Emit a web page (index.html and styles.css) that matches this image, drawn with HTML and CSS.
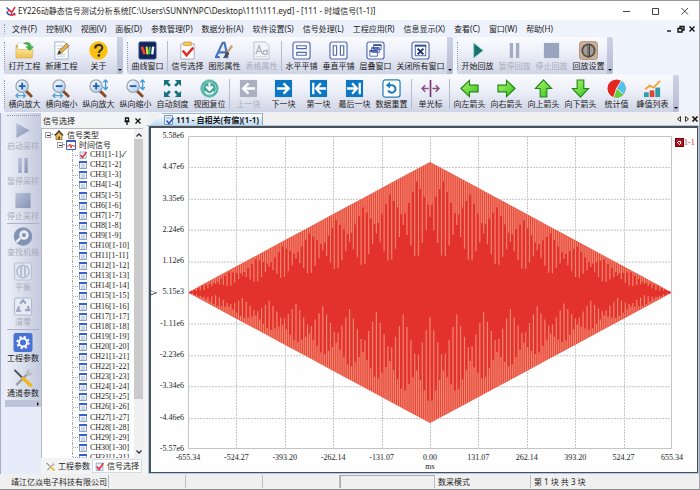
FILE: index.html
```html
<!DOCTYPE html>
<html lang="zh-CN">
<head>
<meta charset="utf-8">
<title>EY226动静态信号测试分析系统</title>
<link rel="stylesheet" href="styles.css">
</head>
<body>
<svg class="defs" aria-hidden="true">
  <defs>
    <linearGradient id="gGreen" x1="0" y1="0" x2="1" y2="1"><stop offset="0" stop-color="#b4f56a"/><stop offset="1" stop-color="#2fc41c"/></linearGradient>
    <linearGradient id="gFolder" x1="0" y1="0" x2="0" y2="1"><stop offset="0" stop-color="#fdf0a8"/><stop offset="1" stop-color="#eec052"/></linearGradient>
    <linearGradient id="gLens" x1="0" y1="0" x2="1" y2="1"><stop offset="0" stop-color="#ffffff"/><stop offset="1" stop-color="#a9cdf2"/></linearGradient>
    <linearGradient id="gGray" x1="0" y1="0" x2="1" y2="1"><stop offset="0" stop-color="#b9c3dc"/><stop offset="1" stop-color="#8592b4"/></linearGradient>
    <g id="lens"><path d="M11.500 12.500l5.500 5.500" stroke="#8a4a28" stroke-width="3" stroke-linecap="round"/><circle cx="7.500" cy="7.500" r="6.500" fill="url(#gLens)" stroke="#9ba5b4" stroke-width="1.400"/></g>
  </defs>
  <symbol id="i-logo" viewBox="0 0 10 10"><path d="M.5 1.500l3 2.500M1 5.500c0 4 6 4.500 8 1.500" stroke="#2c4fb0" stroke-width="1.500" fill="none"/><path d="M1.500 5l3-.5 1 2.500L9 1M4 8.800h5.500" stroke="#e02c3c" stroke-width="1.500" fill="none"/></symbol>
  <symbol id="i-open" viewBox="0 0 20 20"><path d="M1 4h6l1 2h8v5H1z" fill="#d9b04a"/><path d="M3 2h9l3 3v9H3z" fill="#fff" stroke="#c9ccd2" stroke-width=".5"/><path d="M1 18V6l3 3h15l-1 9z" fill="url(#gFolder)" stroke="#d2a84a" stroke-width=".6"/><path d="M9 3c4-3 8-1 8 3h2.500l-4 4-4-4H14c0-2-2-3-5-3z" fill="#43b649" stroke="#2b8d36" stroke-width=".5"/></symbol>
  <symbol id="i-new" viewBox="0 0 20 20"><path d="M3 1h10l4 4v14H3z" fill="#fff" stroke="#9eb0c4"/><path d="M5 5h6M5 8h7M5 14h9M5 16h9" stroke="#b8cbe0"/><path d="M6 14l1.500-4 8-7.500 2.500 2.500-8 7.500z" fill="#f2b23a" stroke="#555" stroke-width=".7"/><path d="M6 14l1.500-4 2.500 2.500z" fill="#333"/></symbol>
  <symbol id="i-about" viewBox="0 0 20 20"><circle cx="10" cy="10" r="9.700" fill="#fcc212"/><path d="M6.500 8c0-5 7.500-5 7.500-.8 0 2.600-3.600 2.600-3.600 5.300" fill="none" stroke="#3b362c" stroke-width="2.300"/><circle cx="10.400" cy="15.300" r="1.500" fill="#3b362c"/></symbol>
  <symbol id="i-curve" viewBox="0 0 20 20"><rect x="1" y="1" width="18" height="18" rx="1.500" fill="#12245c" stroke="#345090"/><path d="M4 6l3 8" stroke="#e94228" stroke-width="3"/><path d="M9 6l1 8" stroke="#f2e33a" stroke-width="2.200"/><path d="M12.500 6l-1 8" stroke="#43c34e" stroke-width="2"/><path d="M16 6l-1 8" stroke="#f4f6fa" stroke-width="2.600"/></symbol>
  <symbol id="i-pick" viewBox="0 0 20 20"><path d="M3 3h14v16H3z" fill="#fff" stroke="#a5abb6"/><path d="M6 1h8v4H6z" fill="#f3c45c" stroke="#c28d32" stroke-width=".6"/><path d="M5 10l4 5 7-8" fill="none" stroke="#e22b2b" stroke-width="2.600"/></symbol>
  <symbol id="i-shape" viewBox="0 0 20 20"><path d="M1 17L8 2h2l3 13M4 12h8M0 17h5M10 17h4" fill="none" stroke="#4674bd" stroke-width="2.300"/><path d="M18 5l-5 7" stroke="#c79f6d" stroke-width="2.400"/><path d="M13 11l2 2c-1 4-4 5-7 5 3-2 2-6 5-7z" fill="#4f4b50"/></symbol>
  <symbol id="i-form" viewBox="0 0 20 20"><path d="M2 1h12l4 4v14H2z" fill="#f3f4f8" stroke="#bcc1cc"/><path d="M4 14l3.500-9 3.500 9M5.500 11h4" fill="none" stroke="#adb2be" stroke-width="1.400"/><path d="M16 9v5.500M16 12c0-3-4-3-4 0s4 3 4 0" fill="none" stroke="#adb2be" stroke-width="1.300"/><path d="M4 16.500h12" stroke="#ccd0da"/></symbol>
  <symbol id="i-frame" viewBox="0 0 20 20"><rect x="1" y="1" width="18" height="18" rx="2.500" fill="#f8faff" stroke="#5269b0" stroke-width="1.200"/></symbol>
  <symbol id="i-htile" viewBox="0 0 20 20"><use href="#i-frame"/><path d="M5 5h10v3H5zM5 12h10v3H5z" fill="#fff" stroke="#5269b0" stroke-width="1.200"/></symbol>
  <symbol id="i-vtile" viewBox="0 0 20 20"><use href="#i-frame"/><path d="M4.500 5H8v10H4.500zM12 5h3.500v10H12z" fill="#fff" stroke="#5269b0" stroke-width="1.200"/></symbol>
  <symbol id="i-cascade" viewBox="0 0 20 20"><use href="#i-frame"/><path d="M8 4h8v5H8zM6 7h8v5H6zM4 10h8v6H4z" fill="#fff" stroke="#5269b0"/><path d="M8 4.500h8M6 7.500h8M4 10.500h8" stroke="#2e4a9e" stroke-width="1.500"/></symbol>
  <symbol id="i-closeall" viewBox="0 0 20 20"><use href="#i-frame"/><rect x="4.500" y="4.500" width="11" height="11" fill="#fff" stroke="#4a63aa"/><path d="M4 5h12" stroke="#3a539c" stroke-width="2"/><path d="M7 8l6 6M13 8l-6 6" stroke="#1d2f6e" stroke-width="2"/></symbol>
  <symbol id="i-play" viewBox="0 0 20 20"><path d="M6 2l10 8-10 8z" fill="#1b6f6c" stroke="#8ed8cf"/></symbol>
  <symbol id="i-pause" viewBox="0 0 20 20"><path d="M5 2h3.500v16H5zM11.500 2H15v16h-3.500z" fill="#a3acc2"/></symbol>
  <symbol id="i-stop" viewBox="0 0 20 20"><path d="M2 2h16v16H2z" fill="#9aa4bf"/></symbol>
  <symbol id="i-knob" viewBox="0 0 20 20"><rect x=".5" y=".5" width="19" height="19" rx="3" fill="#c9ad96" stroke="#b3967d"/><circle cx="10" cy="10" r="7.500" fill="#55504c"/><circle cx="10" cy="10" r="5.500" fill="#a79f96"/><path d="M8.500 3.500h3v13h-3z" fill="#3b3835"/><path d="M9.500 4v12" stroke="#ddd" stroke-width=".8"/></symbol>
  <symbol id="i-hin" viewBox="0 0 20 20"><use href="#lens"/><path d="M7.500 4v7M4 7.500h7" stroke="#275fb4" stroke-width="2"/><path d="M1 17.500h10M3.500 15L1 17.500 3.500 20M8.500 15l2.500 2.500L8.500 20" fill="none" stroke="#4fa3d8" stroke-width="1.400"/></symbol>
  <symbol id="i-hout" viewBox="0 0 20 20"><use href="#lens"/><path d="M4 7.500h7" stroke="#275fb4" stroke-width="2"/><path d="M1 17.500h10M3.500 15L1 17.500 3.500 20M8.500 15l2.500 2.500L8.500 20" fill="none" stroke="#4fa3d8" stroke-width="1.400"/></symbol>
  <symbol id="i-vin" viewBox="0 0 20 20"><use href="#lens"/><path d="M7.500 4v7M4 7.500h7" stroke="#275fb4" stroke-width="2"/><path d="M17.500 1v10M15 3.500L17.500 1 20 3.500M15 8.500l2.500 2.500L20 8.500" fill="none" stroke="#3f9ad6" stroke-width="1.400"/></symbol>
  <symbol id="i-vout" viewBox="0 0 20 20"><use href="#lens"/><path d="M4 7.500h7" stroke="#275fb4" stroke-width="2"/><path d="M17.500 1v10M15 3.500L17.500 1 20 3.500M15 8.500l2.500 2.500L20 8.500" fill="none" stroke="#3f9ad6" stroke-width="1.400"/></symbol>
  <symbol id="i-auto" viewBox="0 0 20 20"><path d="M1 1h6.500L5.300 3.200l3 3-2 2-3-3L1 7.500zM19 1v6.500l-2.300-2.300-3 3-2-2 3-3L12.500 1zM1 19v-6.500l2.300 2.300 3-3 2 2-3 3L7.500 19zM19 19h-6.500l2.200-2.200-3-3 2-2 3 3 2.300-2.300z" fill="#16737c"/></symbol>
  <symbol id="i-reset" viewBox="0 0 20 20"><circle cx="10" cy="10" r="9.300" fill="#3fa79b" stroke="#8ecdc5"/><circle cx="10" cy="10" r="7" fill="none" stroke="#a9ddd6"/><path d="M10 4v7M6.500 8l3.500 3.500L13.500 8" fill="none" stroke="#fff" stroke-width="2.200"/><path d="M5.500 13c2 3.500 7 3.500 9 0" fill="none" stroke="#fff" stroke-width="1.500"/></symbol>
  <symbol id="i-prev" viewBox="0 0 20 20"><path d="M1 1h18v18H1z" fill="#aab0c0"/><path d="M17 10H5M10 4.500L4.500 10l5.500 5.500" fill="none" stroke="#fff" stroke-width="2.600"/></symbol>
  <symbol id="i-next" viewBox="0 0 20 20"><path d="M1 1h18v18H1z" fill="#0b76c2"/><path d="M3 10h12M10 4.500l5.500 5.500-5.500 5.500" fill="none" stroke="#fff" stroke-width="2.600"/></symbol>
  <symbol id="i-first" viewBox="0 0 20 20"><path d="M1 1h18v18H1z" fill="#0b76c2"/><path d="M4.500 4v12M18 10H8M12.500 4.500L7.500 10l5 5.500" fill="none" stroke="#fff" stroke-width="2.400"/></symbol>
  <symbol id="i-last" viewBox="0 0 20 20"><path d="M1 1h18v18H1z" fill="#0b76c2"/><path d="M15.500 4v12M2 10h10M7.500 4.500l5 5.500-5 5.500" fill="none" stroke="#fff" stroke-width="2.400"/></symbol>
  <symbol id="i-reload" viewBox="0 0 20 20"><rect x="1" y="1" width="18" height="18" rx="2.500" fill="#fff" stroke="#2580b4" stroke-width="1.300"/><path d="M6 6.500h5a4 4 0 1 1-4.500 5.500" fill="none" stroke="#1d7fb8" stroke-width="2.200"/><path d="M8.500 3v7L4 6.500z" fill="#1d7fb8"/></symbol>
  <symbol id="i-cursor" viewBox="0 0 20 20"><path d="M10 1v18" stroke="#7c3a74" stroke-width="1.800"/><path d="M1 10h7M12 10h7M4.500 6.500L1 10l3.500 3.500M15.500 6.500L19 10l-3.500 3.500" fill="none" stroke="#8e4a84" stroke-width="1.600"/></symbol>
  <symbol id="i-left" viewBox="0 0 20 20"><path d="M1 10l9-8.500v5h9v7h-9v5z" fill="url(#gGreen)" stroke="#23861b" stroke-width="1.200"/></symbol>
  <symbol id="i-right" viewBox="0 0 20 20"><path d="M19 10l-9-8.500v5H1v7h9v5z" fill="url(#gGreen)" stroke="#23861b" stroke-width="1.200"/></symbol>
  <symbol id="i-up" viewBox="0 0 20 20"><path d="M10 1l8.500 9h-5v9h-7v-9h-5z" fill="url(#gGreen)" stroke="#23861b" stroke-width="1.200"/></symbol>
  <symbol id="i-down" viewBox="0 0 20 20"><path d="M10 19l8.500-9h-5V1h-7v9h-5z" fill="url(#gGreen)" stroke="#23861b" stroke-width="1.200"/></symbol>
  <symbol id="i-pie" viewBox="0 0 20 20"><circle cx="10" cy="10" r="9.500" fill="#e5261f"/><path d="M10 10l5-8.200A9.500 9.500 0 0 1 17.500 16z" fill="#4fc3f0"/><path d="M10 10l7.500 6A9.500 9.500 0 0 1 7 19z" fill="#63cf3e"/><path d="M15 1.800L10 10l-3 9M10 10l7.500 6" stroke="#fff" stroke-width=".8" fill="none"/></symbol>
  <symbol id="i-bars" viewBox="0 0 20 20"><path d="M1 14h5v5H1z" fill="#2b9fa8"/><path d="M7 12h5v7H7z" fill="#e04638"/><path d="M13 9h5v10h-5z" fill="#2f9a9f"/><path d="M2 11l5-4 4 2 7-7" fill="none" stroke="#f0a53a" stroke-width="2"/></symbol>
  <symbol id="i-gplay" viewBox="0 0 20 20"><path d="M3 2l14 8-14 8z" fill="url(#gGray)"/></symbol>
  <symbol id="i-gpause" viewBox="0 0 20 20"><path d="M5 2h3.500v16H5zM11.500 2H15v16h-3.500z" fill="url(#gGray)"/></symbol>
  <symbol id="i-gstop" viewBox="0 0 20 20"><path d="M2 2h16v16H2z" fill="url(#gGray)"/></symbol>
  <symbol id="i-find" viewBox="0 0 20 20"><circle cx="10" cy="10" r="9.700" fill="#8493b4"/><circle cx="11" cy="8.500" r="5" fill="#e9edf6"/><circle cx="11" cy="8.500" r="2.200" fill="#8493b4"/><path d="M7 12l-4 4" stroke="#e9edf6" stroke-width="2.500"/></symbol>
  <symbol id="i-balance" viewBox="0 0 20 20"><rect x="1" y="1" width="18" height="18" rx="2" fill="#dfe4ef" stroke="#b4bed2"/><circle cx="10" cy="10" r="6.500" fill="none" stroke="#a6b2ca" stroke-width="1.300"/><path d="M8 5v10M12 5v10" stroke="#a6b2ca" stroke-width="1.500"/></symbol>
  <symbol id="i-clear" viewBox="0 0 20 20"><rect x="1" y="1" width="18" height="18" rx="2" fill="#e6eaf3" stroke="#a9b4cb"/><path d="M7 7l3-3.500L13 7M15 9.500l1.500 4.500H12M8 14.500H4L6 10" fill="none" stroke="#94a2c0" stroke-width="2.200"/></symbol>
  <symbol id="i-gear" viewBox="0 0 20 20"><rect width="20" height="20" rx="2.500" fill="#4a71d6"/><circle cx="10" cy="10" r="6" fill="none" stroke="#fff" stroke-width="2" stroke-dasharray="2.360 2.350"/><circle cx="10" cy="10" r="4.200" fill="none" stroke="#fff" stroke-width="2"/></symbol>
  <symbol id="i-tools" viewBox="0 0 20 20"><path d="M3 18L15 6" stroke="#9aa0aa" stroke-width="2.600"/><path d="M13 6c0-3 2-5 5-5l-2 3 2 1.500L20 4c0 4-3 5-6 4z" fill="#b9bec7"/><path d="M1 2l8 8" stroke="#4a4f57" stroke-width="2"/><path d="M10 11l8 7" stroke="#efb51e" stroke-width="3.600" stroke-linecap="round"/></symbol>
  <symbol id="i-home" viewBox="0 0 10 10"><path d="M1 5.500L5 1l4 4.500" fill="none" stroke="#3a3320" stroke-width="1.400"/><path d="M2 5.500L5 2.500l3 3V9.500H2z" fill="#f0c257" stroke="#6b5320" stroke-width=".7"/><path d="M4.300 6.500h1.600v3H4.300z" fill="#5c3a1a"/></symbol>
  <symbol id="i-time" viewBox="0 0 10 10"><path d="M.5.500h9v9h-9z" fill="#fff" stroke="#4161b5"/><path d="M.5 1h9" stroke="#2c51c0" stroke-width="1.800"/><path d="M1 6h2l1-2 1 4 1-3 1 1h2" fill="none" stroke="#e23a3a"/></symbol>
  <symbol id="i-chan" viewBox="0 0 8 8"><path d="M.5.500h7v7h-7z" fill="#eef2fb" stroke="#8fa0c0"/><path d="M0 1h8" stroke="#3460d0" stroke-width="2"/><path d="M2 4h4M2 6h4" stroke="#a9b7d4"/></symbol>
  <symbol id="i-mark" viewBox="0 0 8 8"><path d="M1 1h6v6.500H1z" fill="#eaf0fb" stroke="#7c9ad2" stroke-width=".7"/><path d="M1.500 4L3.500 6.500 7.500 1" fill="none" stroke="#e0342c" stroke-width="1.500"/></symbol>
  <symbol id="i-doc" viewBox="0 0 10 10"><path d="M.5.500h8v9h-8z" fill="#e8f0fb" stroke="#7d94bb"/><path d="M2 3h5" stroke="#9aaed0"/><path d="M2.500 5.500L5 8.500 9.500 3" fill="none" stroke="#2a62c4" stroke-width="1.600"/></symbol>
</svg>

<header class="titlebar">
  <svg class="logo"><use href="#i-logo"/></svg>
  <h1>EY226动静态信号测试分析系统[C:\Users\SUNNYNPC\Desktop\111\111.eyd] - [111 - 时域信号(1-1)]</h1>
  <div class="winbtns">
    <button aria-label="最小化"><svg viewBox="0 0 8 8"><path d="M0 4.500h7"/></svg></button>
    <button aria-label="最大化"><svg viewBox="0 0 8 8"><path d="M.5 1.500h6v6h-6z"/></svg></button>
    <button aria-label="关闭"><svg viewBox="0 0 8 8"><path d="M.5 1l6.500 6.500M7 1L.5 7.500"/></svg></button>
  </div>
</header>

<nav class="menubar">
  <i class="grip"></i>
  <button>文件(F)</button><button>控制(K)</button><button>视图(V)</button><button>面板(D)</button><button>参数管理(P)</button><button>数据分析(A)</button><button>软件设置(S)</button><button>信号处理(L)</button><button>工程应用(R)</button><button>信息显示(X)</button><button>查看(C)</button><button>窗口(W)</button><button>帮助(H)</button>
  <div class="mdibtns">
    <button aria-label="最小化子窗口"><svg viewBox="0 0 8 8"><path d="M1 6h4"/></svg></button>
    <button aria-label="还原子窗口"><svg viewBox="0 0 8 8"><path d="M3 3V1.500h4V5H5M1 3.500h4V7H1z"/></svg></button>
    <button aria-label="关闭子窗口"><svg viewBox="0 0 8 8"><path d="M1.500 1.500l5 5M6.500 1.500l-5 5"/></svg></button>
  </div>
</nav>

<div class="toolrow">
  <div class="toolbar">
    <i class="grip"></i>
    <button><svg><use href="#i-open"/></svg>打开工程</button>
    <button><svg><use href="#i-new"/></svg>新建工程</button>
    <button><svg><use href="#i-about"/></svg>关于</button>
    <i class="cap"></i>
  </div>
  <div class="toolbar">
    <i class="grip"></i>
    <button><svg><use href="#i-curve"/></svg>曲线窗口</button>
    <i class="sep"></i>
    <button><svg><use href="#i-pick"/></svg>信号选择</button>
    <button><svg><use href="#i-shape"/></svg>图形属性</button>
    <button disabled><svg><use href="#i-form"/></svg>表格属性</button>
    <i class="sep"></i>
    <button><svg><use href="#i-htile"/></svg>水平平铺</button>
    <button><svg><use href="#i-vtile"/></svg>垂直平铺</button>
    <button><svg><use href="#i-cascade"/></svg>层叠窗口</button>
    <button class="wide"><svg><use href="#i-closeall"/></svg>关闭所有窗口</button>
    <i class="cap"></i>
  </div>
  <div class="toolbar">
    <i class="grip"></i>
    <button><svg><use href="#i-play"/></svg>开始回放</button>
    <button disabled><svg><use href="#i-pause"/></svg>暂停回放</button>
    <button disabled><svg><use href="#i-stop"/></svg>停止回放</button>
    <button><svg><use href="#i-knob"/></svg>回放设置</button>
    <i class="cap"></i>
  </div>
</div>

<div class="toolrow second">
  <div class="toolbar">
    <i class="grip"></i>
    <button><svg><use href="#i-hin"/></svg>横向放大</button>
    <button><svg><use href="#i-hout"/></svg>横向缩小</button>
    <button><svg><use href="#i-vin"/></svg>纵向放大</button>
    <button><svg><use href="#i-vout"/></svg>纵向缩小</button>
    <button><svg><use href="#i-auto"/></svg>自动刻度</button>
    <button><svg><use href="#i-reset"/></svg>视图复位</button>
    <i class="sep"></i>
    <button class="slim" disabled><svg><use href="#i-prev"/></svg>上一块</button>
    <button class="slim"><svg><use href="#i-next"/></svg>下一块</button>
    <button class="slim"><svg><use href="#i-first"/></svg>第一块</button>
    <button><svg><use href="#i-last"/></svg>最后一块</button>
    <button><svg><use href="#i-reload"/></svg>数据重置</button>
    <i class="sep"></i>
    <button class="slim"><svg><use href="#i-cursor"/></svg>单光标</button>
    <i class="sep"></i>
    <button><svg><use href="#i-left"/></svg>向左箭头</button>
    <button><svg><use href="#i-right"/></svg>向右箭头</button>
    <button><svg><use href="#i-up"/></svg>向上箭头</button>
    <button><svg><use href="#i-down"/></svg>向下箭头</button>
    <button class="slim"><svg><use href="#i-pie"/></svg>统计值</button>
    <button><svg><use href="#i-bars"/></svg>峰值列表</button>
    <i class="cap"></i>
  </div>
</div>

<main class="work">
  <aside class="side">
    <div class="sidebar">
      <i class="hgrip"></i>
      <button disabled><svg><use href="#i-gplay"/></svg>启动采样</button>
      <button disabled><svg><use href="#i-gpause"/></svg>暂停采样</button>
      <button disabled><svg><use href="#i-gstop"/></svg>停止采样</button>
      <i class="hsep"></i>
      <button disabled><svg><use href="#i-find"/></svg>查找机箱</button>
      <button disabled><svg><use href="#i-balance"/></svg>平衡</button>
      <button disabled><svg><use href="#i-clear"/></svg>清零</button>
      <i class="hsep"></i>
      <button><svg><use href="#i-gear"/></svg>工程参数</button>
      <button><svg><use href="#i-tools"/></svg>通道参数</button>
      <i class="hcap"></i>
    </div>
  </aside>

  <section class="panel">
    <header class="panelhead">
      <h2>信号选择</h2>
      <button aria-label="固定"><svg viewBox="0 0 8 8"><path d="M2.500 1h3v3h-3zM1.500 4.500h5M4 4.500V8"/></svg></button>
      <button aria-label="关闭面板"><svg viewBox="0 0 8 8"><path d="M1.500 1.500l5 5M6.500 1.500l-5 5"/></svg></button>
    </header>
    <div class="treebox">
      <ul class="tree" id="tree">
        <li class="root"><i class="fold"></i><svg><use href="#i-home"/></svg>信号类型</li>
        <li class="group"><i class="fold"></i><svg><use href="#i-time"/></svg>时间信号</li>
      </ul>
      <div class="scroll">
        <svg viewBox="0 0 8 8"><path d="M1.500 5.500L4 3l2.500 2.500"/></svg>
        <i class="thumb"></i>
        <svg viewBox="0 0 8 8"><path d="M1.500 2.500L4 5l2.500-2.500"/></svg>
      </div>
    </div>
    <div class="paneltabs">
      <button><svg><use href="#i-tools"/></svg>工程参数</button>
      <button class="active"><svg><use href="#i-mark"/></svg>信号选择</button>
    </div>
  </section>

  <section class="docs">
    <div class="doctabs">
      <button class="doctab"><svg><use href="#i-doc"/></svg>111 - 自相关(有偏)(1-1)</button>
      <div class="docnav">
        <button aria-label="上一个"><svg viewBox="0 0 8 8"><path d="M5.500 1.500v5L2.500 4z"/></svg></button>
        <button aria-label="下一个"><svg viewBox="0 0 8 8"><path d="M2.500 1.500v5L5.500 4z"/></svg></button>
        <button aria-label="关闭文档"><svg class="bold" viewBox="0 0 8 8"><path d="M1.500 1.500l5 5M6.500 1.500l-5 5"/></svg></button>
      </div>
    </div>
    <div class="chart">
      <span class="yunit">V</span>
      <div class="yaxis"><span>5.58e6</span><span>4.47e6</span><span>3.35e6</span><span>2.24e6</span><span>1.12e6</span><span>5.15e3</span><span>-1.11e6</span><span>-2.23e6</span><span>-3.34e6</span><span>-4.46e6</span><span>-5.57e6</span></div>
      <svg class="plot" viewBox="0 0 484 314" preserveAspectRatio="none" role="img" aria-label="自相关曲线">
        <path class="gridlines" id="gridlines"/>
        <path class="wave" d="M0 157L242 26 484 157 242 288z"/>
        <path class="stripes" id="stripes"/>
        <path class="edge" d="M.5.500h483v313H.5z"/>
      </svg>
      <div class="legend"><i></i>1-1</div>
      <div class="xaxis"><span>-655.34</span><span>-524.27</span><span>-393.20</span><span>-262.14</span><span>-131.07</span><span>0.00</span><span>131.07</span><span>262.14</span><span>393.20</span><span>524.27</span><span>655.34</span></div>
      <span class="xunit">ms</span>
    </div>
  </section>
</main>

<footer class="status">
  <span class="company">靖江亿焱电子科技有限公司</span>
  <span></span><span></span><span></span>
  <span class="inset"></span>
  <span>数采模式</span>
  <span class="block">第 1 块 共 3 块</span>
</footer>
<script src="app.js"></script>
</body>
</html>
```
FILE: styles.css
```css
* { box-sizing: border-box; }

body {
  margin: 0;
  height: 100vh;
  display: flex;
  flex-direction: column;
  overflow: hidden;
  background: #f0f4fc;
  color: #1c1c22;
  font: 8px/10px "Noto Sans", "Noto Sans CJK SC", sans-serif;
  border-top: 1px solid #9a9a9a;
  border-right: 1px solid #a9a4ac;
  border-bottom: 1px solid #8e8e8e;
}

.defs { position: absolute; width: 0; height: 0; }

h1, h2, ul { margin: 0; padding: 0; font: inherit; }

button {
  margin: 0;
  padding: 0;
  border: 0;
  background: none;
  color: inherit;
  font: inherit;
  white-space: nowrap;
}

svg { display: block; flex: none; }

/* Title and menu */
.titlebar {
  flex: none;
  height: 19px;
  display: flex;
  align-items: center;
  gap: 2px;
  padding-left: 6px;
  background: #fff;
}
.logo { width: 10px; height: 10px; }
.titlebar h1 { flex: 1; white-space: nowrap; }
.winbtns, .mdibtns { display: flex; }
.winbtns { gap: 21px; padding-right: 10px; }
.winbtns svg, .mdibtns svg { width: 8px; height: 8px; fill: none; stroke: #444; }

.menubar {
  flex: none;
  height: 17px;
  display: flex;
  align-items: center;
  gap: 9px;
  padding-left: 4px;
  background: linear-gradient(90deg, #e6ebf8, #f1f5fd);
}
.menubar .grip { margin: 0 -3px 0 0; }
.mdibtns { margin-left: auto; gap: 3px; padding-right: 3px; }
.mdibtns svg { stroke: #111; stroke-width: 1.4; }

.grip {
  width: 2px;
  height: 10px;
  border-left: 1px dotted #8e99b3;
}

/* Toolbars */
.toolrow { flex: none; height: 38px; display: flex; gap: 4px; padding-left: 4px; }
.toolbar {
  position: relative;
  display: flex;
  align-items: center;
  height: 37px;
  padding-right: 6px;
  border-radius: 2px;
  background: linear-gradient(#fafbfe, #eceff8 45%, #cfd4e5);
}
.second .toolbar { padding-right: 8px; }
.toolbar .grip { height: 28px; }
.toolbar button, .sidebar button {
  width: 37px;
  display: flex;
  flex-direction: column;
  align-items: center;
  gap: 1px;
}
.toolbar button.slim { width: 35px; }
.toolbar button.wide { width: 53px; }
.toolbar button svg { width: 19px; height: 19px; }
button:disabled { color: #a9adb9; }
.sep { width: 1px; height: 30px; margin: 0 1px; background: #b4bbce; }
.cap {
  position: absolute;
  right: 0;
  top: 0;
  bottom: 0;
  width: 6px;
  background: linear-gradient(#cdd3e5, #b4bbd3);
  border-radius: 0 2px 2px 0;
}
.cap::after {
  content: "";
  position: absolute;
  left: 1px;
  bottom: 3px;
  border: 2px solid transparent;
  border-top-color: #111;
  border-bottom: 0;
}

/* Work area */
.work {
  flex: 1;
  min-height: 0;
  display: grid;
  grid-template-columns: 41px 106px 1fr;
}
.side { padding-left: 4px; background: #e7ecfa; border-left: 1px solid #a9aec0; }
.sidebar {
  display: flex;
  flex-direction: column;
  align-items: center;
  background: linear-gradient(90deg, #eceff8, #d9deec 50%, #c3c9de);
}
.sidebar button { width: 35px; height: 35px; justify-content: center; gap: 1px; }
.sidebar button svg { width: 20px; height: 19px; }
.hgrip { width: 32px; height: 3px; border-top: 1px dotted #8e99b3; margin-top: 2px; }
.hsep { width: 32px; height: 1px; background: #a9b1c8; }
.hcap { align-self: stretch; height: 7px; background: #bcc3da; position: relative; }
.hcap::after {
  content: "";
  position: absolute;
  right: 2px;
  top: 2px;
  border: 2px solid transparent;
  border-left-color: #111;
  border-right: 0;
}

.panel {
  min-height: 0;
  display: flex;
  flex-direction: column;
  background: #f2f3f5;
}
.panelhead { flex: none; height: 15px; display: flex; align-items: center; gap: 3px; padding: 0 5px 0 2px; }
.panelhead h2 { flex: 1; }
.panelhead svg { width: 8px; height: 8px; fill: none; stroke: #111; stroke-width: 1.3; }
.treebox {
  flex: 1;
  min-height: 0;
  display: grid;
  grid-template-columns: 1fr 9px;
  margin-right: 4px;
  border-left: 1px solid #b5b9c2;
  border-top: 1px solid #b5b9c2;
  background: #fff;
  overflow: hidden;
}
.tree {
  list-style: none;
  display: grid;
  grid-template-rows: repeat(33, 1fr);
  padding-top: 1px;
  margin-bottom: -5px;
  min-height: 0;
}
.tree li {
  display: flex;
  align-items: center;
  gap: 3px;
  min-height: 0;
  line-height: 10px;
  white-space: nowrap;
}
.root { padding-left: 3px; }
.group { padding-left: 15px; }
.tree .root svg, .tree .group svg { width: 10px; height: 10px; }
.fold {
  width: 6px;
  height: 6px;
  border: 1px solid #9a9fa9;
  background: linear-gradient(#333, #333) center / 3px 1px no-repeat;
}
.fold::after { content: ""; display: block; margin: 1px 0 0 5px; width: 4px; border-top: 1px dotted #999; }
.chan {
  margin-left: 30px;
  border-left: 1px dotted #a9a9a9;
  font-family: "Liberation Serif", serif;
  font-size: 8px;
}
.chan::before { content: ""; width: 5px; margin-right: -2px; border-top: 1px dotted #a9a9a9; }
.tree .chan svg { width: 8px; height: 8px; }
.scroll {
  display: flex;
  flex-direction: column;
  align-items: center;
  justify-content: space-between;
  padding: 2px 0;
  background: #f0f0f0;
}
.scroll svg { width: 8px; height: 8px; fill: none; stroke: #333; stroke-width: 1.3; }
.thumb { width: 9px; flex: 0 0 80%; margin-bottom: auto; background: #cbcbcb; }

.paneltabs { flex: none; height: 16px; display: flex; align-items: center; padding-left: 3px; }
.paneltabs button { display: flex; align-items: center; gap: 3px; height: 14px; padding: 0 2px; }
.paneltabs .active { background: #fff; border: 1px solid #d5d9e2; }
.paneltabs svg { width: 9px; height: 9px; }

/* Document area */
.docs { min-width: 0; min-height: 0; display: flex; flex-direction: column; background: #f0f0f0; }
.doctabs { flex: none; height: 13px; display: flex; align-items: flex-end; padding-left: 3px; border-bottom: 1px solid #8fb6d0; }
.doctab {
  height: 12px;
  display: flex;
  align-items: center;
  gap: 2px;
  padding: 0 3px 0 14px;
  background: linear-gradient(#fff, #bfdcf3);
  border-right: 1px solid #8aa5bd;
  border-top: 1px solid #9db4c9;
  clip-path: polygon(12px 0, 100% 0, 100% 100%, 0 100%);
  font-weight: bold;
}
.doctab svg { width: 10px; height: 10px; }
.docnav { margin-left: auto; display: flex; padding: 0 0 2px; }
.docnav svg { width: 8px; height: 8px; fill: none; stroke: #333; }
.docnav .bold { stroke: #111; stroke-width: 1.6; }

.chart {
  flex: 1;
  min-height: 0;
  display: grid;
  grid-template-columns: 8px 29px 1fr 25px;
  grid-template-rows: 1fr 13px 10px;
  margin: 0 1px 1px 2px;
  padding: 8px 0 0;
  border: 2px solid #4d4f55;
  border-right-width: 1px;
  border-bottom-width: 1px;
  outline: 1px solid #a9cde6;
  background: #fefefe;
  font: 8px/10px "Liberation Serif", serif;
}
.yunit { align-self: center; writing-mode: vertical-rl; transform: rotate(180deg); line-height: 8px; }
.yaxis {
  display: flex;
  flex-direction: column;
  justify-content: space-between;
  align-items: flex-end;
  margin: -4px 4px -4px -6px;
  line-height: 8px;
}
.plot { width: 100%; height: 100%; min-height: 0; }
.wave { fill: #e3312b; }
.stripes { fill: none; stroke: #f4977a; stroke-width: 1.2; stroke-opacity: .85; }
.gridlines { fill: none; stroke: #c4c4c4; stroke-dasharray: 2 1; }
.edge { fill: none; stroke: #c4c4c4; }
.legend { display: flex; align-items: center; height: 9px; margin: 2px 0 0 3px; color: #e02030; }
.legend i { width: 9px; height: 9px; border: 1px solid #5a1010; background: radial-gradient(circle, #c00d18 0 1px, #fff 1px 2px, #c00d18 2px); }
.xaxis { grid-column: 3; display: flex; justify-content: space-between; align-items: flex-end; line-height: 8px; }
.xaxis span { width: 0; display: flex; justify-content: center; }
.xunit { grid-column: 3; justify-self: center; }

/* Status bar */
.status {
  flex: none;
  height: 15px;
  display: grid;
  grid-template-columns: 105px 77px 77px 77px 95px 96px 1fr;
  padding: 1px 0 1px 4px;
  background: #f0f0f0;
  line-height: 13px;
}
.status span { border-right: 1px solid #bcbcc4; padding-left: 3px; white-space: nowrap; }
.status .company { padding-left: 7px; }
.status .inset { border-left: 1px solid #aaa; border-top: 1px solid #aaa; }
.status .block { border-right: 0; }
```
FILE: app.js
```js
const SVG = "http://www.w3.org/2000/svg";

// Channel rows of the signal tree
const tree = document.getElementById("tree");
for (let n = 1; n <= 31; n++) {
  const li = document.createElement("li");
  li.className = "chan";
  const svg = document.createElementNS(SVG, "svg");
  const use = document.createElementNS(SVG, "use");
  use.setAttribute("href", n === 1 ? "#i-mark" : "#i-chan");
  svg.append(use);
  li.append(svg, `CH${n}[1-${n}]${n === 1 ? "✓" : ""}`);
  tree.append(li);
}

// Grid: ten divisions each way
let grid = "";
for (let i = 1; i < 10; i++) {
  grid += `M${Math.round(i * 48.4) + 0.5} 0V314M0 ${Math.round(i * 31.4) + 0.5}H484`;
}
document.getElementById("gridlines").setAttribute("d", grid);

// Beat pattern: two interleaved sets of crests under the triangular envelope
const CX = 242, CY = 157, PEAK = 131, BEAT = 26.8, STEP = BEAT / 7;
let d = "";
for (let k = -63; k <= 63; k++) {
  for (const half of [0, 1]) {
    const dx = (k + half / 2) * STEP;
    const env = PEAK * (1 - Math.abs(dx) / CX);
    if (env < 2) continue;
    const m = Math.abs(dx) % BEAT;
    const t = Math.min(m, BEAT - m) / (BEAT / 2);
    const top = half ? 0.64 + 0.26 * t : 0.58 - 0.33 * t;
    const bottom = half ? 0.87 - 0.24 * t : 0.19 + 0.36 * t;
    const x = (CX + dx).toFixed(1);
    d += `M${x} ${(CY - env).toFixed(1)}V${(CY - env * top).toFixed(1)}`;
    d += `M${x} ${(CY + env).toFixed(1)}V${(CY + env * bottom).toFixed(1)}`;
  }
}
document.getElementById("stripes").setAttribute("d", d);
```
